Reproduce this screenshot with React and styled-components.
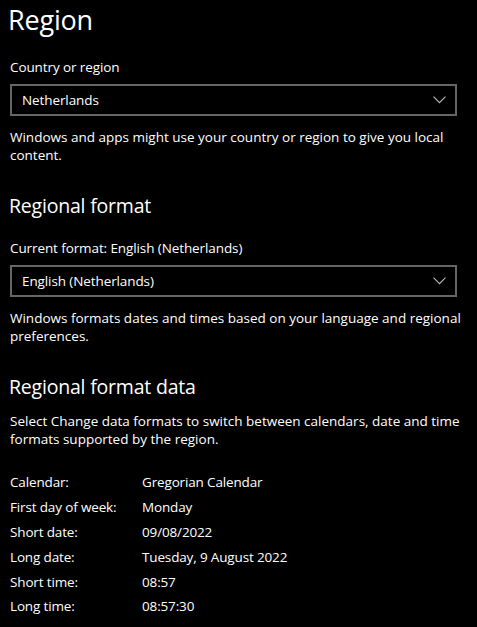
import React from 'react';
import styled, { createGlobalStyle } from 'styled-components';

const GlobalStyle = createGlobalStyle`
  html, body {
    margin: 0;
    background: #000;
  }
  body {
    font-family: "Open Sans", "Noto Sans", sans-serif;
    color: #fff;
  }
`;

const Page = styled.div`
  width: 477px;
  height: 627px;
  overflow: hidden;
  padding: 0 0 0 10px;
  box-sizing: border-box;
  background: #000;
`;

const Title = styled.h1`
  margin: 0;
  padding-top: 2px;
  margin-left: -2px;
  font-size: 27px;
  font-weight: 400;
  line-height: 36px;
  letter-spacing: -0.2px;
`;

const SubTitle = styled.h2`
  margin: ${(p) => p.$top}px 0 0 -1px;
  font-size: 19.5px;
  font-weight: 400;
  line-height: 26px;
  letter-spacing: -0.2px;
`;

const Label = styled.div`
  margin-top: ${(p) => p.$top}px;
  font-size: 13.5px;
  line-height: 20px;
  letter-spacing: -0.1px;
`;

const Select = styled.div`
  margin-top: 7px;
  width: 447px;
  height: 32px;
  box-sizing: border-box;
  border: 2px solid #666;
  display: flex;
  align-items: center;
  justify-content: space-between;
  padding: 0 9px 0 10px;
  font-size: 13.5px;
  letter-spacing: -0.1px;
`;

const Chevron = () => (
  <svg width="13" height="8" viewBox="0 0 13 8">
    <path d="M0.5 0.7 L6.5 6.7 L12.5 0.7" fill="none" stroke="#bbb" strokeWidth="1.1" />
  </svg>
);

const Desc = styled.p`
  margin: ${(p) => p.$top}px 0 0;
  width: 462px;
  font-size: 13.5px;
  line-height: 18px;
  letter-spacing: 0;
`;

const Table = styled.div`
  margin-top: 22px;
  display: grid;
  grid-template-columns: 132px 1fr;
  grid-auto-rows: 24.8px;
  font-size: 13.5px;
  letter-spacing: -0.15px;
  align-items: center;
`;

const rows = [
  ['Calendar:', 'Gregorian Calendar'],
  ['First day of week:', 'Monday'],
  ['Short date:', '09/08/2022'],
  ['Long date:', 'Tuesday, 9 August 2022'],
  ['Short time:', '08:57'],
  ['Long time:', '08:57:30'],
];

export default function App() {
  return (
    <>
      <GlobalStyle />
      <Page>
        <Title>Region</Title>
        <Label $top={19}>Country or region</Label>
        <Select>
          <span>Netherlands</span>
          <Chevron />
        </Select>
        <Desc $top={12}>
          Windows and apps might use your country or region to give you local content.
        </Desc>
        <SubTitle $top={29}>Regional format</SubTitle>
        <Label $top={19}>Current format: English (Netherlands)</Label>
        <Select>
          <span>English (Netherlands)</span>
          <Chevron />
        </Select>
        <Desc $top={12}>
          Windows formats dates and times based on your language and regional preferences.
        </Desc>
        <SubTitle $top={29}>Regional format data</SubTitle>
        <Desc $top={12}>
          Select Change data formats to switch between calendars, date and time formats
          supported by the region.
        </Desc>
        <Table>
          {rows.map(([k, v]) => (
            <React.Fragment key={k}>
              <span>{k}</span>
              <span>{v}</span>
            </React.Fragment>
          ))}
        </Table>
      </Page>
    </>
  );
}
